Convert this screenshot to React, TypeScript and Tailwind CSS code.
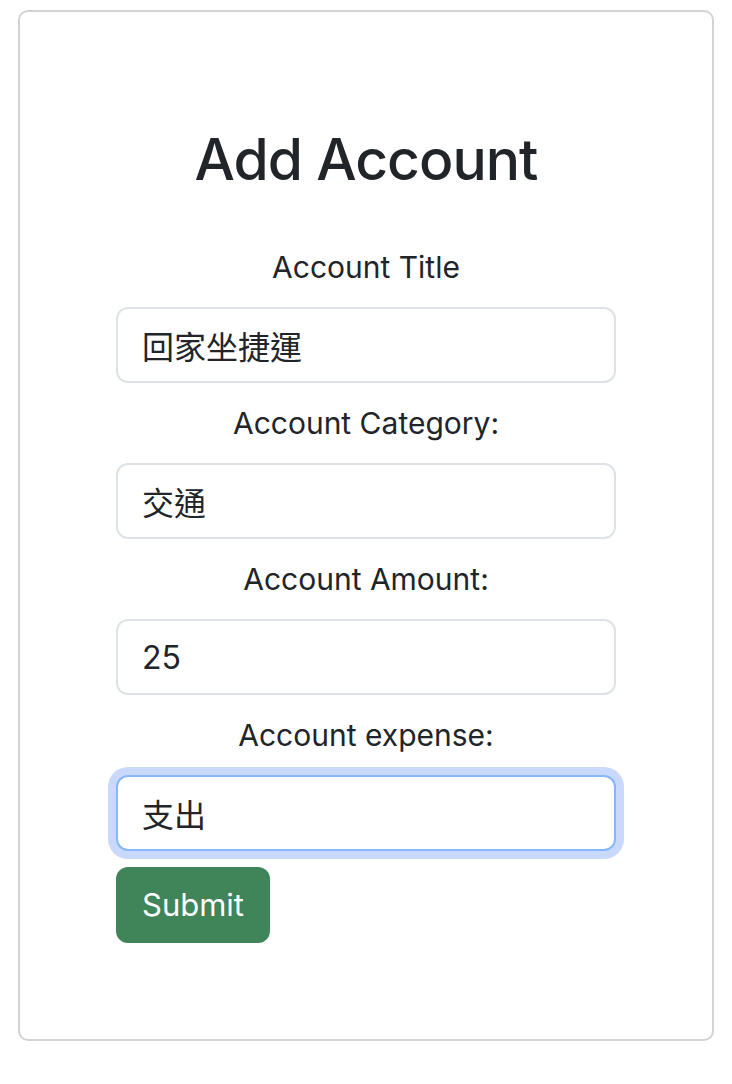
import React from "react";

const font = { fontFamily: 'Inter, "Noto Sans CJK TC", sans-serif' };

function Field({ label, value, focused }: { label: string; value: string; focused?: boolean }) {
  return (
    <div className="flex flex-col">
      <label className="block text-center text-[30px] leading-[48px] text-[#212529] mb-[16px]">{label}</label>
      <input
        readOnly
        value={value}
        className={
          focused
            ? "block w-full h-[76px] rounded-[12px] border-2 border-[#86b7fe] px-[24px] text-[32px] text-[#212529] bg-white outline-none shadow-[0_0_0_8px_#c9d9fb]"
            : "block w-full h-[76px] rounded-[12px] border-2 border-[#dee2e6] px-[24px] text-[32px] text-[#212529] bg-white outline-none"
        }
        style={font}
      />
    </div>
  );
}

export default function App() {
  return (
    <div className="bg-white min-h-[1084px] pt-[10px] pl-[18px]" style={font}>
      <div className="w-[696px] border-2 border-[#d3d3d3] rounded-[10px] pt-[114px] pb-[96px] flex flex-col items-center">
        <h2 className="text-[57px] leading-[68.4px] font-medium tracking-[-1px] text-[#212529] mb-[49px]">Add Account</h2>
        <form className="w-[500px] flex flex-col gap-[16px]" onSubmit={(e) => e.preventDefault()}>
          <Field label="Account Title" value="回家坐捷運" />
          <Field label="Account Category:" value="交通" />
          <Field label="Account Amount:" value="25" />
          <Field label="Account expense:" value="支出" focused />
          <div>
            <button
              type="submit"
              className="h-[76px] px-[26px] rounded-[12px] bg-[#40845a] text-white text-[31px] leading-[48px]"
              style={font}
            >
              Submit
            </button>
          </div>
        </form>
      </div>
    </div>
  );
}
